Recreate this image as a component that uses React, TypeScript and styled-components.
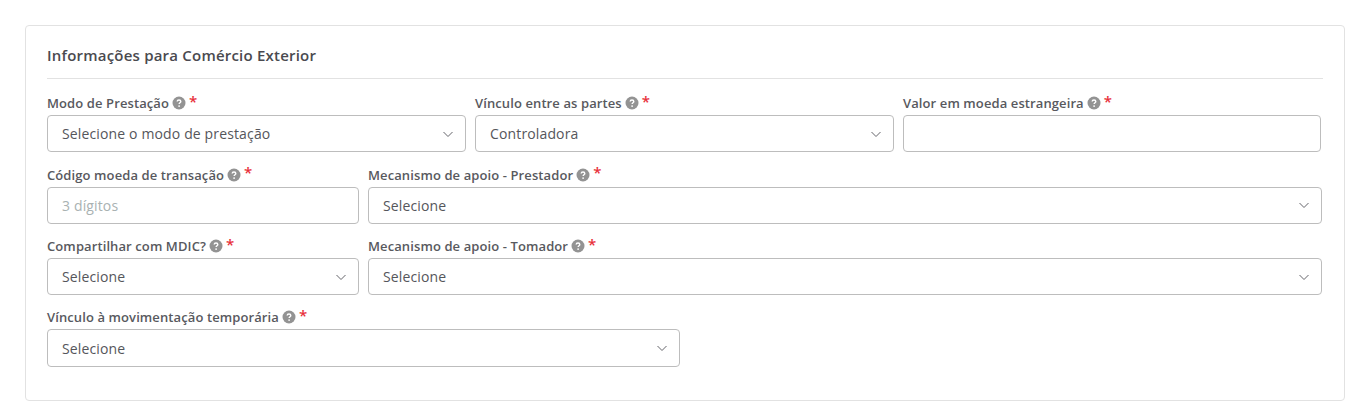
import React from "react";
import styled, { createGlobalStyle } from "styled-components";

const Global = createGlobalStyle`
  html, body { margin: 0; padding: 0; background: #fff; }
  body { font-family: "Open Sans", "Liberation Sans", sans-serif; }
`;

const Page = styled.div`
  padding: 25px 21px 14px 25px;
  box-sizing: border-box;
  width: 1366px;
  height: 415px;
  overflow: hidden;
`;

const Card = styled.section`
  box-sizing: border-box;
  height: 376px;
  border: 1px solid #e2e2e2;
  border-radius: 4px;
  padding: 17px 21px 0 21px;
`;

const Title = styled.h2`
  margin: 0;
  font-size: 15px;
  letter-spacing: 0.21px;
  line-height: 24px;
  font-weight: 600;
  color: #4a4a4f;
  height: 35px;
  border-bottom: 1px solid #e2e2e2;
`;

const Grid = styled.div`
  display: grid;
  grid-template-columns: repeat(12, 98px);
  column-gap: 9px;
  row-gap: 0;
  grid-auto-rows: 71.3px;
  margin-top: 14.45px;
`;

const Field = styled.div<{ $span: number; $trim?: boolean }>`
  grid-column: span ${(p) => p.$span};
  min-width: 0;
  margin-right: ${(p) => (p.$trim ? "1px" : "0")};
`;

const LabelRow = styled.div`
  box-sizing: border-box;
  display: flex;
  align-items: center;
  height: 22px;
  padding-bottom: 2px;
  font-size: 13px;
  letter-spacing: 0.1px;
  font-weight: 600;
  color: #58595e;
  white-space: nowrap;
`;

const Star = styled.span`
  color: #e8303a;
  font-size: 15px;
  line-height: 14px;
  font-weight: 600;
  margin-left: 3px;
  margin-top: -5px;
`;

const Help = styled.svg`
  width: 14px;
  height: 14px;
  margin-left: 3px;
  flex: none;
`;

const Control = styled.div<{ $tall?: boolean }>`
  box-sizing: border-box;
  height: ${(p) => (p.$tall ? "38px" : "37px")};
  border: 1px solid #bdbdbd;
  border-radius: 4px;
  padding: 0 12px 0 14px;
  display: flex;
  align-items: center;
  justify-content: space-between;
  font-size: 14px;
  letter-spacing: 0.14px;
  color: #55565b;
  background: #fff;
`;

const Placeholder = styled.span`
  color: #a9b2b2;
`;

const Chevron = styled.svg`
  width: 10px;
  height: 10px;
  flex: none;
`;

const HelpIcon = () => (
  <Help viewBox="0 0 14 14" aria-hidden="true">
    <circle cx="7" cy="7" r="6.5" fill="#939393" />
    <path
      d="M5.2 5.6c0-1 .8-1.6 1.8-1.6s1.8.6 1.8 1.5c0 1.3-1.7 1.3-1.7 2.6"
      fill="none"
      stroke="#fff"
      strokeWidth="1.4"
    />
    <circle cx="7.1" cy="10.1" r=".9" fill="#fff" />
  </Help>
);

const ChevronIcon = () => (
  <Chevron viewBox="0 0 10 10" aria-hidden="true">
    <path d="M.5 3L5 7.5 9.5 3" fill="none" stroke="#64656b" strokeWidth="1" />
  </Chevron>
);

type Item = {
  label: string;
  span: number;
  value?: string;
  placeholder?: string;
  input?: boolean;
  trim?: boolean;
  tall?: boolean;
};

const items: Item[] = [
  { label: "Modo de Prestação", span: 4, value: "Selecione o modo de prestação" },
  { label: "Vínculo entre as partes", span: 4, value: "Controladora" },
  { label: "Valor em moeda estrangeira", span: 4, input: true, trim: true },
  { label: "Código moeda de transação", span: 3, placeholder: "3 dígitos", input: true },
  { label: "Mecanismo de apoio - Prestador", span: 9, value: "Selecione" },
  { label: "Compartilhar com MDIC?", span: 3, value: "Selecione" },
  { label: "Mecanismo de apoio - Tomador", span: 9, value: "Selecione" },
  { label: "Vínculo à movimentação temporária", span: 6, value: "Selecione", tall: true },
];

export default function App() {
  return (
    <Page>
      <Global />
      <Card>
        <Title>Informações para Comércio Exterior</Title>
        <Grid>
          {items.map((it) => (
            <Field key={it.label} $span={it.span} $trim={it.trim}>
              <LabelRow>
                {it.label}
                <HelpIcon />
                <Star>*</Star>
              </LabelRow>
              <Control $tall={it.tall}>
                {it.placeholder ? <Placeholder>{it.placeholder}</Placeholder> : <span>{it.value}</span>}
                {!it.input && <ChevronIcon />}
              </Control>
            </Field>
          ))}
        </Grid>
      </Card>
    </Page>
  );
}
